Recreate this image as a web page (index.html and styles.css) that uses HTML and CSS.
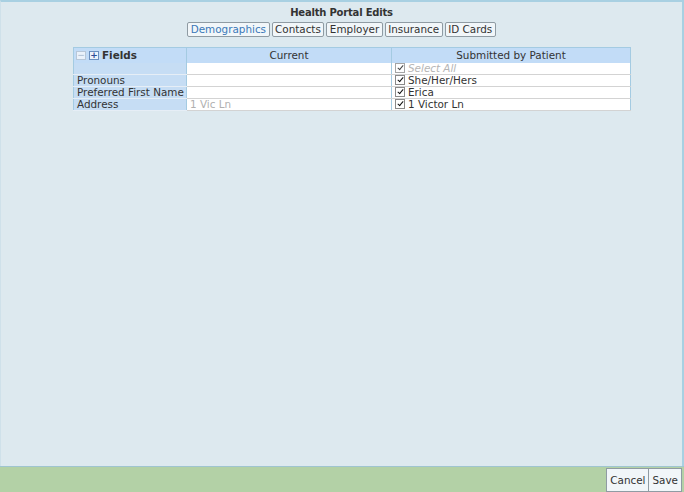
FILE: index.html
```html
<!DOCTYPE html>
<html lang="en">
<head>
    <meta charset="UTF-8">
    <title>Health Portal Edits</title>
    <link rel="stylesheet" href="styles.css">
</head>
<body>
    <div class="dialog">
        <main class="content">
            <h3 class="title">Health Portal Edits</h3>
            <nav class="tabs">
                <button class="tab tab-active">Demographics</button>
                <button class="tab">Contacts</button>
                <button class="tab">Employer</button>
                <button class="tab">Insurance</button>
                <button class="tab">ID Cards</button>
            </nav>
            <table class="edits">
                <colgroup>
                    <col class="col-field">
                    <col class="col-current">
                    <col>
                </colgroup>
                <thead>
                    <tr>
                        <th class="head-field">
                            <span class="tree-btn tree-off">&minus;</span><span class="tree-btn">+</span>Fields
                        </th>
                        <th>Current</th>
                        <th>Submitted by Patient</th>
                    </tr>
                </thead>
                <tbody>
                    <tr>
                        <td class="field"></td>
                        <td></td>
                        <td><span class="check check-off"></span><span class="muted">Select All</span></td>
                    </tr>
                    <tr>
                        <td class="field">Pronouns</td>
                        <td></td>
                        <td><span class="check"></span>She/Her/Hers</td>
                    </tr>
                    <tr>
                        <td class="field">Preferred First Name</td>
                        <td></td>
                        <td><span class="check"></span>Erica</td>
                    </tr>
                    <tr>
                        <td class="field">Address</td>
                        <td class="old">1 Vic Ln</td>
                        <td><span class="check"></span>1 Victor Ln</td>
                    </tr>
                </tbody>
            </table>
        </main>
        <footer class="footer">
            <button class="action">Cancel</button>
            <button class="action">Save</button>
        </footer>
    </div>
</body>
</html>
```

FILE: styles.css
```css
* {
    margin: 0;
    box-sizing: border-box;
}

body {
    font-family: Tahoma, "DejaVu Sans", Verdana, sans-serif;
    font-size: 10.4px;
    color: #333;
    background-color: #dde9ef;
}

.dialog {
    height: 100vh;
    display: flex;
    flex-direction: column;
}

.content {
    flex: 1;
    border-top: 2px solid #a8d0e2;
    border-right: 2px solid #a8d0e2;
    border-left: 1px solid #cfe1ea;
    display: flex;
    flex-direction: column;
    align-items: center;
    padding-top: 4px;
}

.title {
    font-size: 10px;
    letter-spacing: -0.2px;
    font-weight: bold;
    color: #333;
    height: 14px;
    line-height: 14px;
}

.tabs {
    display: flex;
    gap: 2px;
    margin-top: 2px;
}

.tab {
    font-family: inherit;
    font-size: 10.4px;
    color: #333;
    background-color: #f1f6f9;
    border: 1px solid #8f9ba3;
    border-radius: 2px;
    padding: 0 2.5px;
    height: 15px;
    line-height: 13px;
}

.tab-active {
    color: #3b78b8;
}

.edits {
    align-self: flex-start;
    margin-top: 10px;
    margin-left: 72px;
    width: 558px;
    table-layout: fixed;
    border-collapse: collapse;
    border: 1px solid #a4cbe2;
}

.col-field {
    width: 113px;
}

.col-current {
    width: 205px;
}

.edits th {
    font-weight: normal;
    background-color: #c2dcf7;
    height: 15px;
    padding: 0 3px;
    border-right: 1px solid #a4cbe2;
    line-height: 13px;
}

.edits .head-field {
    text-align: left;
    font-weight: bold;
    padding-left: 2px;
}

.edits td {
    height: 11.5px;
    line-height: 11px;
    padding: 0 3px;
    background-color: #fff;
    border-bottom: 1px solid #d3d3d3;
    border-right: 1px solid #a4cbe2;
    white-space: nowrap;
    overflow: hidden;
}

.edits td.field {
    background-color: #c6ddf4;
    border-bottom: 1px solid #e6eef6;
}

.old {
    color: #b0b0b0;
}

.muted {
    color: #b5b5b5;
    font-style: italic;
}

.tree-btn {
    display: inline-block;
    width: 10px;
    height: 9px;
    border: 1px solid #6a8fbf;
    background-color: #eaf2fb;
    color: #2c4f99;
    font-size: 9px;
    line-height: 6px;
    text-align: center;
    vertical-align: 1px;
    margin-right: 3px;
}

.tree-off {
    border-color: #b7c7d8;
    color: #b7c7d8;
}

/* small checked box, mark drawn with two borders */
.check {
    display: inline-block;
    width: 10px;
    height: 10px;
    border: 1px solid #8a8a8a;
    background-color: #fff;
    margin-right: 3px;
    vertical-align: -1px;
    position: relative;
}

.check::after {
    content: "";
    position: absolute;
    left: 2.5px;
    top: 0.5px;
    width: 2px;
    height: 5px;
    border-right: 1.5px solid #111;
    border-bottom: 1.5px solid #111;
    transform: rotate(40deg);
}

.check-off {
    border-color: #a5a5a5;
}

.check-off::after {
    border-color: #444;
}

.footer {
    height: 26px;
    background-color: #b3d1a6;
    border-top: 1px solid #9fc5d0;
    display: flex;
    justify-content: flex-end;
    align-items: flex-end;
    padding-right: 2px;
}

.action {
    font-family: inherit;
    font-size: 10.4px;
    color: #333;
    background-color: #f1f6f9;
    border: 1px solid #8f9ba3;
    height: 24px;
    padding: 0 3px;
}

.action + .action {
    border-left: none;
}
```
